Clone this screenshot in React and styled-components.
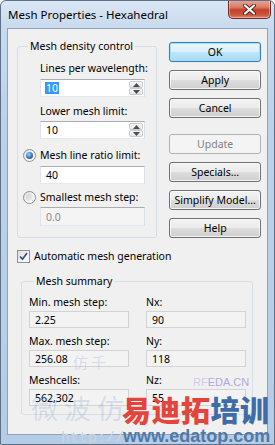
import React from 'react';
import styled, { createGlobalStyle, css } from 'styled-components';

const FONT = `"Noto Sans", "Liberation Sans", Arial, sans-serif`;

const Global = createGlobalStyle`
  html, body { margin: 0; padding: 0; width: 275px; height: 445px; overflow: hidden; background: #ffffff; }
  #root { width: 275px; height: 445px; }
  *, *::before, *::after { box-sizing: border-box; }
`;

const Window = styled.div`
  position: relative;
  width: 275px;
  height: 445px;
  display: flex;
  flex-direction: column;
  padding: 0 6px 9px 6px;
  border: 1px solid #5c7189;
  border-radius: 6px 6px 0 0;
  background: linear-gradient(180deg, #dae6f4 0px, #c8daee 28px, #bcd2eb 120px, #b5cce7 100%);
  font-family: ${FONT};
  overflow: hidden;
`;

const TitleBar = styled.div`
  height: 27px;
  flex: none;
  display: flex;
  align-items: flex-start;
  justify-content: space-between;
`;

const Title = styled.div`
  padding: 7px 0 0 1px;
  font-size: 11.5px;
  line-height: 14px;
  color: #000;
`;

const CloseBtn = styled.div`
  width: 43px;
  height: 19px;
  margin: -1px -3px 0 0;
  border: 1px solid #6b2b22;
  border-top: none;
  border-radius: 0 0 5px 5px;
  background: linear-gradient(180deg, #e9a899 0%, #db7c66 40%, #c44028 55%, #cd5a40 85%, #df8a74 100%);
  box-shadow: inset 0 0 0 1px rgba(255, 255, 255, 0.35);
  display: flex;
  align-items: center;
  justify-content: center;
`;

const Client = styled.div`
  flex: 1;
  display: flex;
  flex-direction: column;
  background: #f0f0f0;
  border: 1px solid #8ea3bb;
  padding: 10px 6px 0 9px;
  font-size: 10.5px;
  color: #000;
`;

const TopRow = styled.div`
  display: flex;
  align-items: flex-start;
  gap: 12px;
`;

const Group = styled.fieldset`
  margin: ${(p) => p.$margin || '0'};
  width: ${(p) => p.$width || 'auto'};
  padding: ${(p) => p.$padding || '0'};
  border: 1px solid #d5dfe5;
  border-radius: 3px;
  min-width: 0;
`;

const Legend = styled.legend`
  margin-left: 5px;
  padding: 0 2px;
  font-size: 10.5px;
  line-height: 14px;
  color: #000;
`;

const Label = styled.div`
  line-height: 14px;
  height: 14px;
  white-space: nowrap;
  margin: ${(p) => p.$margin || '0'};
  padding-left: ${(p) => p.$indent || 0}px;
`;

const OptionRow = styled.label`
  display: flex;
  align-items: center;
  gap: 4px;
  height: 14px;
  line-height: 14px;
  white-space: nowrap;
  margin: ${(p) => p.$margin || '0'};
`;

const RadioOuter = styled.span`
  width: 13px;
  height: 13px;
  flex: none;
  border-radius: 50%;
  border: 1px solid #8c9095;
  background: linear-gradient(135deg, #d9dadb 0%, #f6f6f6 60%, #ffffff 100%);
  display: flex;
  align-items: center;
  justify-content: center;
`;

const RadioDot = styled.span`
  width: 7px;
  height: 7px;
  border-radius: 50%;
  ${(p) =>
    p.$checked
      ? css`
          background: radial-gradient(circle at 40% 35%, #a9d6f6 0%, #3f86c8 45%, #123d6e 100%);
        `
      : css`
          background: linear-gradient(135deg, #cfd0d2, #f1f1f1);
        `}
`;

const CheckBox = styled.span`
  width: 13px;
  height: 13px;
  flex: none;
  border: 1px solid #8e8f8f;
  background: linear-gradient(135deg, #dcdcdc 0%, #f8f8f8 70%, #ffffff 100%);
  display: flex;
  align-items: center;
  justify-content: center;
`;

const Edit = styled.div`
  position: relative;
  width: 105px;
  height: ${(p) => p.$h || 18}px;
  margin: ${(p) => p.$margin || '0'};
  margin-left: 17px;
  border: 1px solid;
  border-color: #abadb3 #dbdfe6 #e3e9ef #e2e3ea;
  background: ${(p) => (p.$disabled ? '#f4f4f4' : '#ffffff')};
  color: ${(p) => (p.$disabled ? '#8a8a8a' : '#000')};
  display: flex;
  align-items: center;
  padding-left: 5px;
  line-height: 12px;
`;

const Selected = styled.span`
  background: #3399ff;
  color: #fff;
  padding: 0 1px;
  margin-left: -1px;
`;

const Spin = styled.div`
  position: absolute;
  right: 1px;
  top: 1px;
  bottom: 1px;
  width: 14px;
  display: flex;
  flex-direction: column;
`;

const SpinBtn = styled.div`
  flex: 1;
  border: 1px solid #c9cccf;
  border-radius: 2px;
  background: linear-gradient(180deg, #fafafa, #e6e6e6);
  display: flex;
  align-items: center;
  justify-content: center;
`;

const ButtonCol = styled.div`
  width: 92px;
  margin-top: 3px;
  display: flex;
  flex-direction: column;
  gap: 8px;
`;

const Button = styled.div`
  height: 20px;
  margin-top: ${(p) => p.$mt || 0}px;
  border-radius: 3px;
  display: flex;
  align-items: center;
  justify-content: center;
  white-space: nowrap;
  font-size: 10.5px;
  ${(p) =>
    p.$default
      ? css`
          border: 1px solid #3c7fb1;
          background: linear-gradient(180deg, #eaf6fd 0%, #d9f0fc 50%, #bee6fd 50%, #a7d9f5 100%);
          box-shadow: inset 0 0 0 1px #9fe0f8, 0 0 1px #6fc2ee;
          color: #000;
        `
      : p.$disabled
      ? css`
          border: 1px solid #adb2b5;
          background: #f4f4f4;
          color: #838383;
        `
      : css`
          border: 1px solid #707070;
          background: linear-gradient(180deg, #f2f2f2 0%, #ebebeb 50%, #dddddd 50%, #cfcfcf 100%);
          box-shadow: inset 0 0 0 1px rgba(255, 255, 255, 0.75);
          color: #000;
        `}
`;

const SummaryGrid = styled.div`
  display: grid;
  grid-template-columns: 100px 100px;
  column-gap: 17px;
  row-gap: 6px;
`;

const Cell = styled.div`
  display: flex;
  flex-direction: column;
  gap: 2px;
`;

const ReadOnly = styled.div`
  height: 17px;
  border: 1px solid #d3d3d3;
  background: #f3f3f3;
  padding-left: 5px;
  display: flex;
  align-items: center;
  line-height: 12px;
`;

/* watermark overlay */
const Watermark = styled.div`
  position: absolute;
  left: ${(p) => p.$x}px;
  top: ${(p) => p.$y}px;
  white-space: nowrap;
  pointer-events: none;
`;

const WmBig = styled.span`
  font-family: "Noto Sans CJK SC", sans-serif;
  font-weight: 900;
  font-size: 29px;
  line-height: 30px;
  letter-spacing: 0.5px;
  color: ${(p) => p.$color};
`;

const WmUrl = styled.span`
  font-family: "Liberation Sans", Arial, sans-serif;
  font-weight: bold;
  font-size: 18px;
  line-height: 17px;
  color: #5279a5;
`;

const WmSmall = styled.span`
  font-family: "Liberation Sans", Arial, sans-serif;
  font-size: 11px;
  color: ${(p) => p.$color};
`;

const WmFaint = styled.span`
  font-family: ${(p) => p.$family || '"Noto Sans CJK SC", serif'};
  font-size: ${(p) => p.$size}px;
  line-height: 1;
  color: ${(p) => p.$color};
`;

const ArrowUp = () => (
  <svg width="7" height="4" viewBox="0 0 7 4">
    <path d="M0 4 L3.5 0 L7 4 Z" fill="#4d4d4d" />
  </svg>
);
const ArrowDown = () => (
  <svg width="7" height="4" viewBox="0 0 7 4">
    <path d="M0 0 L3.5 4 L7 0 Z" fill="#4d4d4d" />
  </svg>
);

const CloseX = () => (
  <svg width="13" height="11" viewBox="0 0 13 11">
    <path d="M2 1.5 L11 9.5 M11 1.5 L2 9.5" stroke="#5a2218" strokeWidth="4" strokeLinecap="round" />
    <path d="M2 1.5 L11 9.5 M11 1.5 L2 9.5" stroke="#ffffff" strokeWidth="2.2" strokeLinecap="round" />
  </svg>
);

const Check = () => (
  <svg width="9" height="9" viewBox="0 0 9 9">
    <path d="M1 4.5 L3.5 7.2 L8 1" stroke="#3a4f8a" strokeWidth="1.8" fill="none" />
  </svg>
);

const SpinEdit = ({ children, margin }) => (
  <Edit $margin={margin}>
    {children}
    <Spin>
      <SpinBtn>
        <ArrowUp />
      </SpinBtn>
      <SpinBtn>
        <ArrowDown />
      </SpinBtn>
    </Spin>
  </Edit>
);

const Radio = ({ checked }) => (
  <RadioOuter>
    <RadioDot $checked={checked} />
  </RadioOuter>
);

const summary = [
  ['Min. mesh step:', '2.25', 'Nx:', '90'],
  ['Max. mesh step:', '256.08', 'Ny:', '118'],
  ['Meshcells:', '562,302', 'Nz:', '55'],
];

export default function App() {
  return (
    <>
      <Global />
      <Window>
        <TitleBar>
          <Title>Mesh Properties - Hexahedral</Title>
          <CloseBtn>
            <CloseX />
          </CloseBtn>
        </TitleBar>
        <Client>
          <TopRow>
            <Group $width="141px" $padding="0 0 11px 5px">
              <Legend>Mesh density control</Legend>
              <Label $indent={17} $margin="8px 0 0 0">Lines per wavelength:</Label>
              <SpinEdit margin="4px 0 0 0">
                <Selected>10</Selected>
              </SpinEdit>
              <Label $indent={17} $margin="7px 0 0 0">Lower mesh limit:</Label>
              <SpinEdit margin="3px 0 0 0">10</SpinEdit>
              <OptionRow $margin="9px 0 0 0">
                <Radio checked />
                Mesh line ratio limit:
              </OptionRow>
              <Edit $margin="4px 0 0 0" $h={18}>40</Edit>
              <OptionRow $margin="6px 0 0 0">
                <Radio />
                Smallest mesh step:
              </OptionRow>
              <Edit $margin="3px 0 0 0" $h={19} $disabled>0.0</Edit>
            </Group>
            <ButtonCol>
              <Button $default>OK</Button>
              <Button>Apply</Button>
              <Button>Cancel</Button>
              <Button $disabled $mt={8}>Update</Button>
              <Button>Specials...</Button>
              <Button>Simplify Model...</Button>
              <Button>Help</Button>
            </ButtonCol>
          </TopRow>
          <OptionRow $margin="11px 0 0 0">
            <CheckBox>
              <Check />
            </CheckBox>
            Automatic mesh generation
          </OptionRow>
          <Group $margin="11px 8px 0 4px" $padding="7px 0 8px 7px">
            <Legend>Mesh summary</Legend>
            <SummaryGrid>
              {summary.map(([l1, v1, l2, v2]) => (
                <React.Fragment key={l1}>
                  <Cell>
                    <Label>{l1}</Label>
                    <ReadOnly>{v1}</ReadOnly>
                  </Cell>
                  <Cell>
                    <Label>{l2}</Label>
                    <ReadOnly>{v2}</ReadOnly>
                  </Cell>
                </React.Fragment>
              ))}
            </SummaryGrid>
          </Group>
        </Client>

        <Watermark $x={72} $y={350}>
          <WmFaint $size={15} $color="rgba(120,150,185,0.25)">仿 千</WmFaint>
        </Watermark>
        <Watermark $x={30} $y={393}>
          <WmFaint $size={27} $color="rgba(110,150,195,0.22)">微 波 仿</WmFaint>
        </Watermark>
        <Watermark $x={192} $y={368}>
          <WmSmall $color="#d3cbee">RF</WmSmall>
          <WmSmall $color="#b3a6de">EDA.CN</WmSmall>
        </Watermark>
        <Watermark $x={60} $y={424}>
          <WmFaint $size={15} $family='"Liberation Mono", monospace' $color="#ccd5de">http://</WmFaint>
        </Watermark>
        <Watermark $x={121} $y={393}>
          <WmBig $color="#e3443b">易迪拓</WmBig>
          <WmBig $color="#3f6ca6">培训</WmBig>
        </Watermark>
        <Watermark $x={122} $y={424}>
          <WmUrl>www.edatop.com</WmUrl>
        </Watermark>
      </Window>
    </>
  );
}
